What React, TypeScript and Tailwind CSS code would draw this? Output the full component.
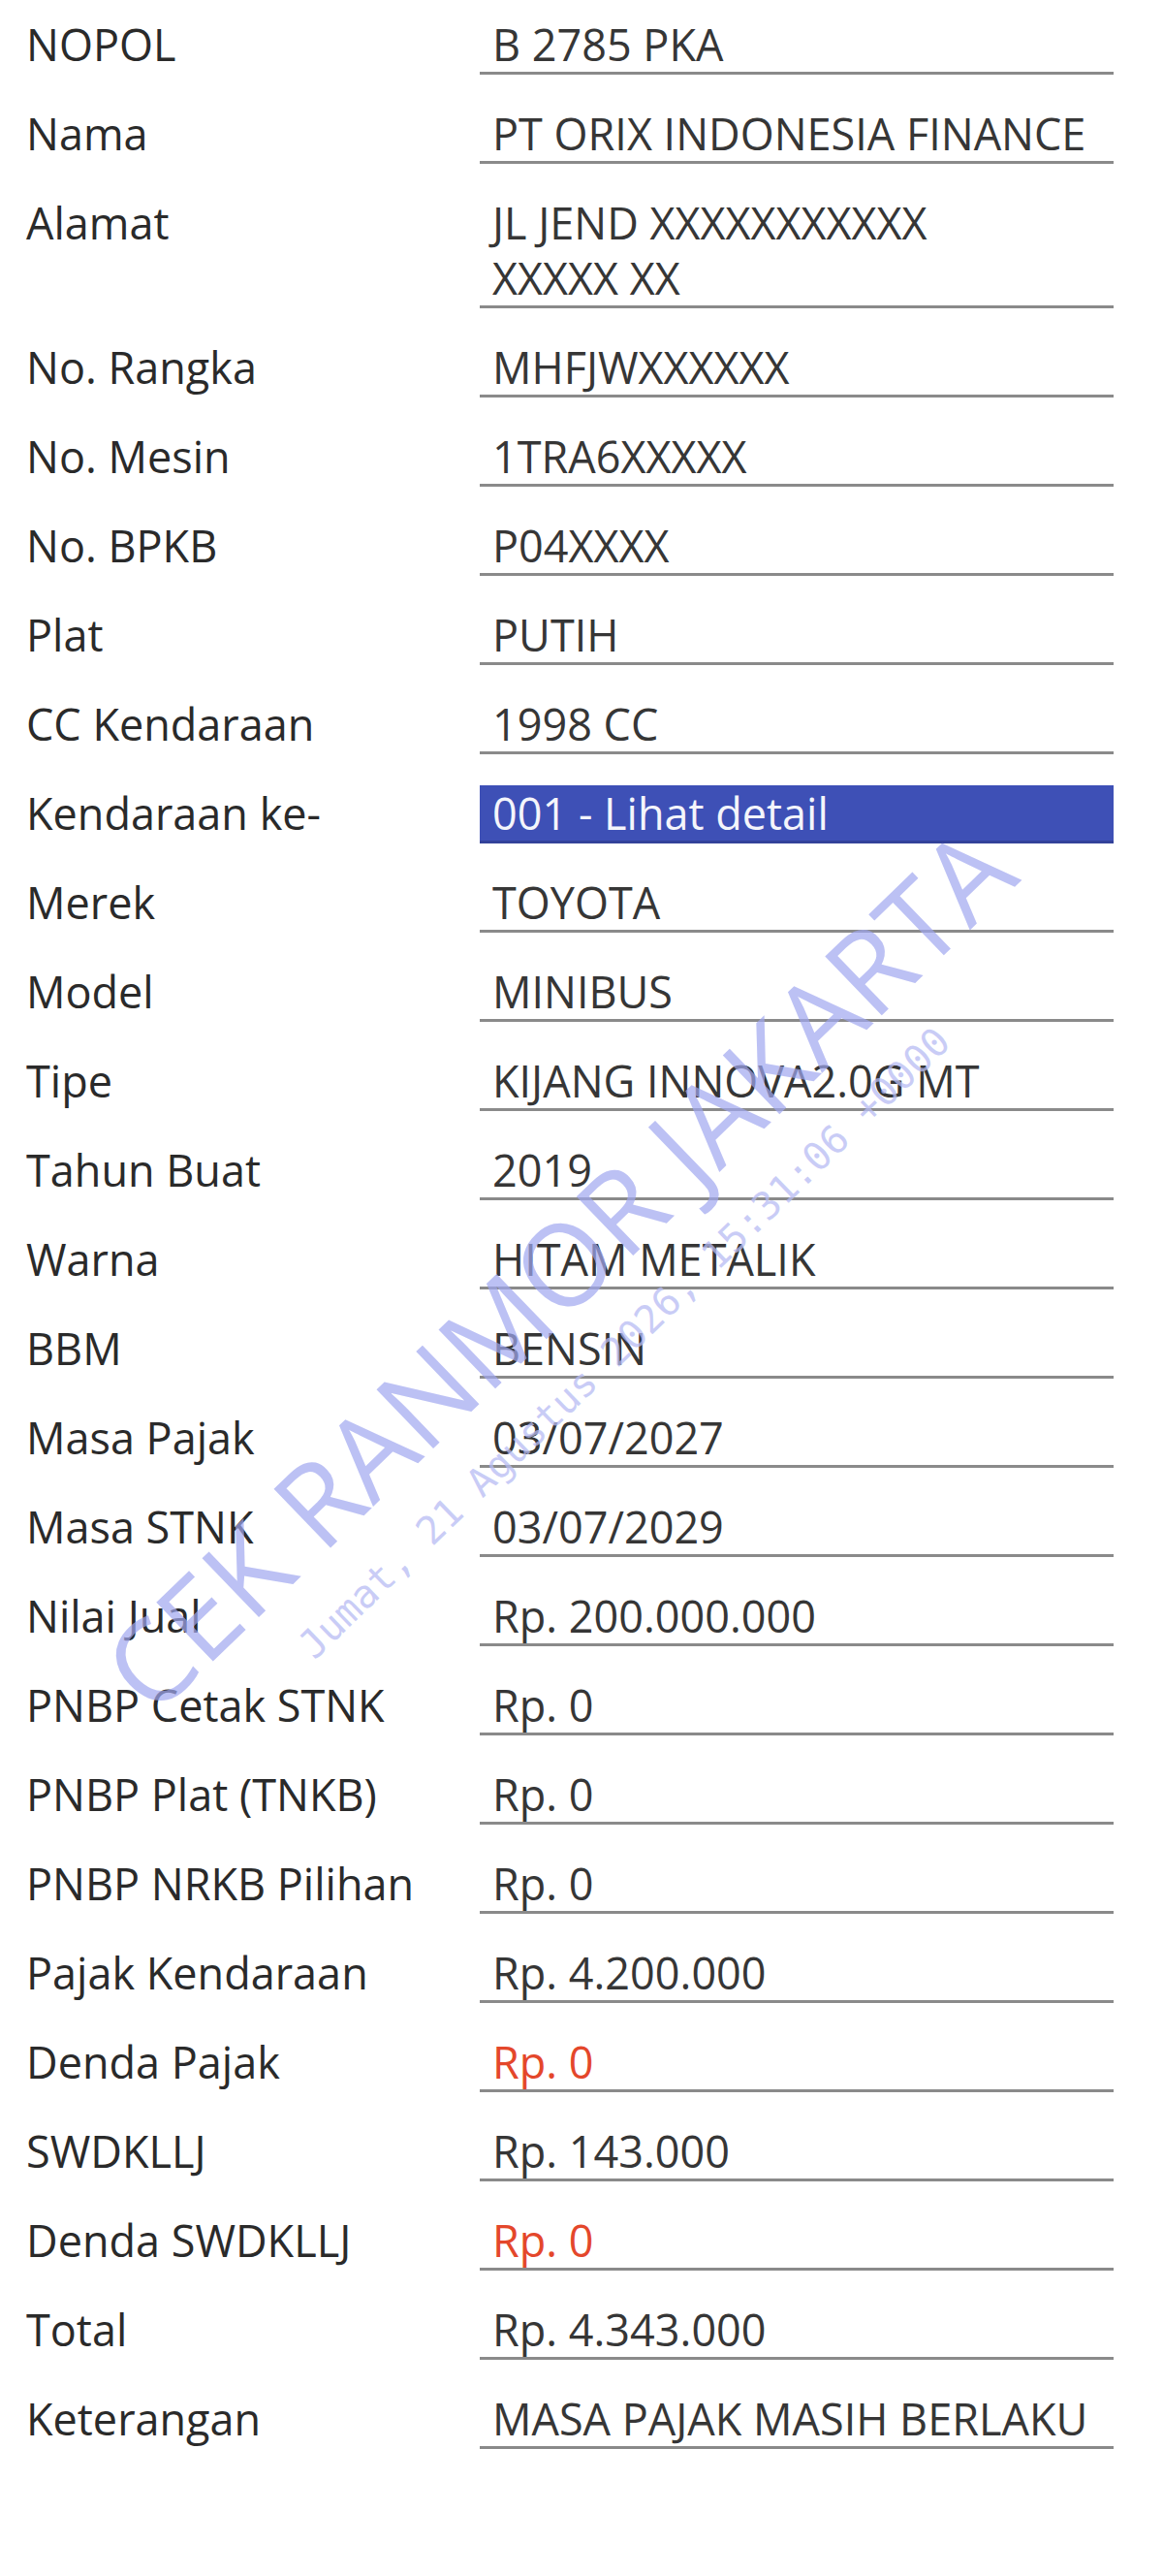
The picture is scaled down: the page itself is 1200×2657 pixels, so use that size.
type Row = {
	label: string;
	value: string[];
	tone?: 'red' | 'link';
};

const rows: Row[] = [
	{ label: 'NOPOL', value: ['B 2785 PKA'] },
	{ label: 'Nama', value: ['PT ORIX INDONESIA FINANCE'] },
	{ label: 'Alamat', value: ['JL JEND XXXXXXXXXXX', 'XXXXX XX'] },
	{ label: 'No. Rangka', value: ['MHFJWXXXXXX'] },
	{ label: 'No. Mesin', value: ['1TRA6XXXXX'] },
	{ label: 'No. BPKB', value: ['P04XXXX'] },
	{ label: 'Plat', value: ['PUTIH'] },
	{ label: 'CC Kendaraan', value: ['1998 CC'] },
	{ label: 'Kendaraan ke-', value: ['001 - Lihat detail'], tone: 'link' },
	{ label: 'Merek', value: ['TOYOTA'] },
	{ label: 'Model', value: ['MINIBUS'] },
	{ label: 'Tipe', value: ['KIJANG INNOVA2.0G MT'] },
	{ label: 'Tahun Buat', value: ['2019'] },
	{ label: 'Warna', value: ['HITAM METALIK'] },
	{ label: 'BBM', value: ['BENSIN'] },
	{ label: 'Masa Pajak', value: ['03/07/2027'] },
	{ label: 'Masa STNK', value: ['03/07/2029'] },
	{ label: 'Nilai Jual', value: ['Rp. 200.000.000'] },
	{ label: 'PNBP Cetak STNK', value: ['Rp. 0'] },
	{ label: 'PNBP Plat (TNKB)', value: ['Rp. 0'] },
	{ label: 'PNBP NRKB Pilihan', value: ['Rp. 0'] },
	{ label: 'Pajak Kendaraan', value: ['Rp. 4.200.000'] },
	{ label: 'Denda Pajak', value: ['Rp. 0'], tone: 'red' },
	{ label: 'SWDKLLJ', value: ['Rp. 143.000'] },
	{ label: 'Denda SWDKLLJ', value: ['Rp. 0'], tone: 'red' },
	{ label: 'Total', value: ['Rp. 4.343.000'] },
	{ label: 'Keterangan', value: ['MASA PAJAK MASIH BERLAKU'] },
];

function DataRow({ row }: { row: Row }) {
	const isLink = row.tone === 'link';
	return (
		<div className="flex items-start">
			<div className="w-[495px] shrink-0 pl-[27px] text-[45px] leading-[57px] text-[#2a2a2a]">
				{row.label}
			</div>
			<div
				className={
					isLink
						? 'w-[654px] shrink-0 border-b-[3px] border-[#33429a] bg-[#3e50b6] pl-[13px] text-[45px] leading-[57px] text-[#f4f5fb]'
						: row.tone === 'red'
							? 'w-[654px] shrink-0 border-b-[3px] border-[#8a8a8a] pl-[13px] text-[45px] leading-[57px] text-[#e4472b]'
							: 'w-[654px] shrink-0 border-b-[3px] border-[#8a8a8a] pl-[13px] text-[45px] leading-[57px] text-[#363636]'
				}
			>
				{row.value.map((line) => (
					<div key={line} className="whitespace-nowrap">
						{line}
					</div>
				))}
			</div>
		</div>
	);
}

export default function App() {
	return (
		<div
			className="relative h-[2657px] w-[1200px] overflow-hidden bg-white pt-[17px]"
			style={{ fontFamily: '"Open Sans", "Noto Sans", sans-serif' }}
		>
			<div className="flex flex-col gap-[32px]">
				{rows.map((row) => (
					<DataRow key={row.label} row={row} />
				))}
			</div>

			{/* watermark */}
			<div className="pointer-events-none absolute left-[575px] top-[1308px] -translate-x-1/2 -translate-y-1/2 -rotate-[44deg] whitespace-nowrap text-[118px] font-normal leading-none text-[#9fa7f0]/70">
				CEK RANMOR JAKARTA
			</div>
			<div
				className="pointer-events-none absolute left-[644px] top-[1385px] -translate-x-1/2 -translate-y-1/2 -rotate-[44deg] whitespace-nowrap text-[40px] leading-none text-[#b7bcf3]/75"
				style={{ fontFamily: '"DejaVu Sans Mono", monospace' }}
			>
				Jumat, 21 Agustus 2026, 15:31:06 +0000
			</div>
		</div>
	);
}
